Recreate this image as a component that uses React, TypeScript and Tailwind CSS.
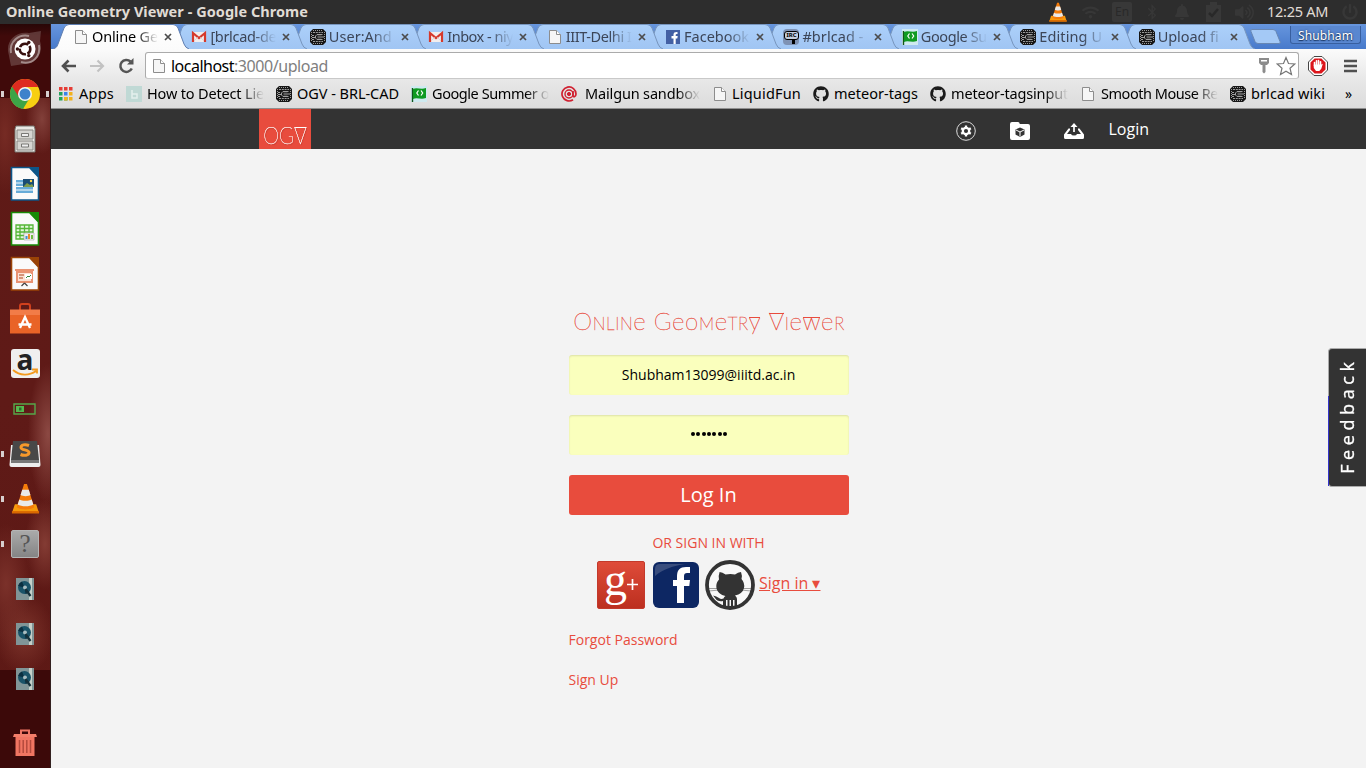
import { useLayoutEffect, useRef, useState, type ReactNode } from 'react';
import { FaGithub, FaBluetoothB, FaBell, FaWifi, FaVolumeUp, FaPowerOff } from 'react-icons/fa';

/* Text whose tracking is adjusted so that the line fills a given width. */
function Fit({ w, children, className = '' }: { w: number; children: string; className?: string }) {
  const ref = useRef<HTMLSpanElement>(null);
  const [ls, setLs] = useState(0);
  useLayoutEffect(() => {
    if (ref.current) {
      const natural = ref.current.getBoundingClientRect().width;
      setLs((w - natural) / children.length);
    }
  }, []);
  return (
    <span ref={ref} className={`inline-block whitespace-pre ${className}`} style={{ letterSpacing: ls }}>
      {children}
    </span>
  );
}

const Chip = () => (
  <svg width="16" height="16" viewBox="0 0 16 16" className="shrink-0">
    <path d="M3 0h10l3 3v10l-3 3H3l-3-3V3z" fill="#161616" />
    <path d="M3 1.500h10M3 14.500h10M1.500 3v10M14.500 3v10" stroke="#9a9a9a" strokeWidth="1" strokeDasharray="1 1" fill="none" />
    <path d="M3 3.500h10M3 12.500h10" stroke="#9a9a9a" strokeWidth="1" strokeDasharray="2 .8" />
    <path d="M12.500 5.500H7L5.500 7v2L7 10.500h5.500M14 8H8.500M2 6.500h2M2 8.500h3M2 10.500h2" fill="none" stroke="#a0a0a0" strokeWidth="1" />
    <path d="M7.500 6.500h4v3h-4z" fill="#5e5e5e" />
  </svg>
);

const Page = () => (
  <svg width="16" height="16" viewBox="0 0 16 16" className="shrink-0">
    <path d="M2.500 1.500h7l4 4v9h-11z" fill="#f6f6f6" stroke="#8d8d8d" />
    <path d="M9.500 1.500v4h4" fill="#fff" stroke="#8d8d8d" />
  </svg>
);

const Gmail = () => (
  <svg width="16" height="16" viewBox="0 0 16 16" className="shrink-0">
    <path d="M1 3h14v10H1z" fill="#f2eded" />
    <path d="M2 13V4L8 9l6-5v9" fill="none" stroke="#d5392c" strokeWidth="2.200" />
    <path d="M3 12l4-4M13 12l-4-4" stroke="#d9cccc" strokeWidth=".7" />
  </svg>
);

const Flag = () => (
  <svg width="16" height="16" viewBox="0 0 16 16" className="shrink-0">
    <path d="M0 0h16v16H0z" fill="#cfeaf0" />
    <path d="M1.500 2v14" stroke="#11551a" strokeWidth="1.400" />
    <path d="M2 3c4-2 8 1 13-1v10c-5 2-9-1-13 1z" fill="#0f9a22" />
    <path d="M7.500 4.500L5.800 7l1.700 2.500M10 4.500L11.700 7 10 9.500" stroke="#fff" strokeWidth="1.200" fill="none" />
  </svg>
);

const Facebook = () => (
  <svg width="16" height="16" viewBox="0 0 16 16" className="shrink-0">
    <path d="M1 1h14v14H1z" fill="#4360a4" />
    <path d="M8.500 15V9.500h-2V7h2V5.500C8.500 3.500 10 2.800 12.500 3v2c-1.500 0-1.800.1-1.800 1v1h2l-.4 2.500h-1.600V15z" fill="#fff" />
  </svg>
);

const Irc = () => (
  <span className="flex h-4 w-4 shrink-0 flex-col items-center rounded-[4px] bg-[#7e92b4] pt-[2px]">
    <span className="flex h-[9px] w-[15px] items-center justify-center rounded-[3px] border border-black bg-[#c4cede] text-[6px] font-bold leading-none text-black">IRC</span>
    <span className="ml-[4px] h-[4px] w-[3px] bg-black" />
  </span>
);

const Mailgun = () => (
  <svg width="16" height="16" viewBox="0 0 16 16" className="shrink-0" fill="none" stroke="#d02030">
    <circle cx="8" cy="8" r="1.600" fill="#d02030" />
    <circle cx="8" cy="8" r="4" strokeWidth="1.400" />
    <path d="M12 5v4.500c0 2 3 1.500 3-1.500a7 7 0 1 0-3 5.700" strokeWidth="1.700" />
  </svg>
);

const Faded = () => (
  <svg width="16" height="16" viewBox="0 0 16 16" className="shrink-0">
    <path d="M0 0h16v16H0z" fill="#c0d9d5" />
    <path d="M6 4v8h5V8H6" fill="none" stroke="#e4efed" strokeWidth="1.500" />
  </svg>
);

const Apps = () => (
  <svg width="14" height="14" viewBox="0 0 14 14" className="shrink-0">
    <path d="M0 0h3.500v3.500H0zM5 0h3.500v3.500H5zM10 0h3.500v3.500H10z" fill="#e53c35" />
    <path d="M0 5h3.500v3.500H0z" fill="#22a25a" /><path d="M5 5h3.500v3.500H5z" fill="#3b82e8" /><path d="M10 5h3.500v3.500H10z" fill="#f3b21b" />
    <path d="M0 10h3.500v3.500H0zM5 10h3.500v3.500H5z" fill="#22a25a" /><path d="M5 10h3.500v3.500H5zM10 10h3.500v3.500H10z" fill="#f3b21b" />
  </svg>
);

const Vlc = ({ size }: { size: number }) => (
  <svg width={size} height={size} viewBox="0 0 32 32" className="shrink-0">
    <path d="M5 22h22l3 9H2z" fill="#f79a0c" />
    <path d="M2 29h28v2.500H2z" fill="#d96800" />
    <path d="M14.500 1h3L25 25c-4 3-14 3-18 0z" fill="#f57c0a" />
    <path d="M12.600 7h6.800l1.700 5.500c-2 1.500-8 1.500-10.200 0zM9.600 17c3 1.800 9.800 1.800 12.800 0l1.700 5.200c-3.500 2.400-12.500 2.400-16.200 0z" fill="#e9e9e9" />
  </svg>
);

type Tab = { icon: ReactNode; text: string; w: number };
const tabs: Tab[] = [
  { icon: <Page />, text: 'Online Ge', w: 66 },
  { icon: <Gmail />, text: '[brlcad-de', w: 66 },
  { icon: <Chip />, text: 'User:And', w: 63 },
  { icon: <Gmail />, text: 'Inbox - niy', w: 66 },
  { icon: <Page />, text: 'IIIT-Delhi I', w: 66 },
  { icon: <Facebook />, text: 'Facebook', w: 65 },
  { icon: <Irc />, text: '#brlcad -', w: 61 },
  { icon: <Flag />, text: 'Google Su', w: 66 },
  { icon: <Chip />, text: 'Editing U', w: 63 },
  { icon: <Chip />, text: 'Upload fi', w: 61 },
];

function TabItem({ tab, index }: { tab: Tab; index: number }) {
  const active = index === 0;
  return (
    <div className="relative -mr-[17.600px] h-[25px] w-[136px] shrink-0" style={{ zIndex: 20 - index }}>
      <svg className="absolute inset-0" width="136" height="25" viewBox="0 0 136 25">
        <defs>
          <linearGradient id={`tab${index}`} x1="0" y1="0" x2="0" y2="1">
            <stop offset="0" stopColor={active ? '#ffffff' : '#acd0fa'} />
            <stop offset="1" stopColor={active ? '#fbfbfb' : '#a0c5f3'} />
          </linearGradient>
        </defs>
        <path
          d="M0 25C3 24 4 23 5 20L11 4Q12.500 .5 16 .5H120Q123.500 .5 125 4L131 20Q132.500 24 136 25"
          fill={`url(#tab${index})`}
          stroke={active ? '#5f7eb0' : '#7795bd'}
          strokeWidth="1"
        />
      </svg>
      <div className="relative flex h-full items-center pl-5">
        {tab.icon}
        <span className={`ml-[3px] flex w-[66px] shrink-0 text-[14.500px] leading-[22px] -mt-px [mask-image:linear-gradient(to_right,#000_66%,transparent)] ${active ? 'text-black' : 'text-[#3c4658]'}`}>
          <Fit w={tab.w}>{tab.text}</Fit>
        </span>
        <svg className="ml-[6px]" width="8" height="8" viewBox="0 0 8 8"><path d="M1 1l6 6M7 1l-6 6" stroke="#4c4c4c" strokeWidth="1.700" /></svg>
      </div>
    </div>
  );
}

type Bookmark = { icon: ReactNode; text: string; w: number; gap?: number; fade?: boolean };
const bookmarks: Bookmark[] = [
  { icon: <Apps />, text: 'Apps', w: 35, gap: 6 },
  { icon: <Faded />, text: 'How to Detect Lie', w: 117, fade: true },
  { icon: <Chip />, text: 'OGV - BRL-CAD', w: 102 },
  { icon: <Flag />, text: 'Google Summer o', w: 117, fade: true },
  { icon: <Mailgun />, text: 'Mailgun sandbox', w: 115, gap: 8, fade: true },
  { icon: <Page />, text: 'LiquidFun', w: 69, gap: 4 },
  { icon: <FaGithub size={16} className="shrink-0 text-[#1b1b1b]" />, text: 'meteor-tags', w: 84 },
  { icon: <FaGithub size={16} className="shrink-0 text-[#1b1b1b]" />, text: 'meteor-tagsinput', w: 117, fade: true },
  { icon: <Page />, text: 'Smooth Mouse Re', w: 117, fade: true },
  { icon: <Chip />, text: 'brlcad wiki', w: 74 },
];

function Doc({ edge, kind }: { edge: string; kind: 'text' | 'sheet' | 'slides' }) {
  return (
    <svg width="30" height="36" viewBox="0 0 30 36">
      <path d="M1.500 1.500h18L28.500 11v23h-27z" fill="#fafafa" stroke={edge} strokeWidth="1.600" />
      <path d="M19 1h10v10z" fill={edge} />
      {kind === 'text' && (
        <g>
          <path d="M6 14h17v2.500H6zM6 17.500h17V20H6zM6 21h17v2.500H6zM6 24.500h17V27H6z" fill="#66abd8" />
          <path d="M13 13h11v8H13z" fill="#194c74" /><path d="M13 21l4-4 3 2 2-1 2 3z" fill="#7c9a4b" /><circle cx="21" cy="15" r="1.200" fill="#ffd447" />
        </g>
      )}
      {kind === 'sheet' && (
        <g>
          <path d="M6 14h17v14H6z" fill="#e5f7df" />
          <path d="M6 14h17v14H6zM6 17.500h17M6 21h17M6 24.500h17M10 14v14M14.500 14v14M19 14v14" stroke="#55b637" fill="none" strokeWidth="1.300" />
          <path d="M14 22h10v7H14z" fill="#eee" stroke="#aaa" strokeWidth=".6" /><path d="M15.500 25h2v3h-2z" fill="#3e91d2" /><path d="M18 23h2v5h-2z" fill="#e98c2b" /><path d="M21 24h2v4h-2z" fill="#71bb43" />
        </g>
      )}
      {kind === 'slides' && (
        <g>
          <path d="M5 13h19v2H5zM6 15h17v12H6z" fill="#e99372" /><path d="M8 17h13v8H8z" fill="#fbe2d6" />
          <path d="M9 19h5M9 22h4" stroke="#c8795a" strokeWidth="1.500" /><path d="M15 18h7v5h-7z" fill="#fff" /><path d="M16 22l2-2 1 1 2-2" stroke="#35863d" fill="none" />
          <path d="M14.500 27l-3 3M14.500 27l3 3" stroke="#444" strokeWidth="1.200" />
        </g>
      )}
    </svg>
  );
}

const Disk = () => (
  <svg width="20" height="24" viewBox="0 0 20 24">
    <path d="M1 1h18v22H1z" fill="#809597" /><path d="M14 1h3v22h-3z" fill="#c5cfc8" />
    <circle cx="9.500" cy="10.500" r="6.500" fill="#1a5368" /><path d="M9.500 10.500L3 9a6.500 6.500 0 0 1 4-4.500zM9.500 10.500l5 4.500a6.500 6.500 0 0 1-4 2z" fill="#0b3041" />
    <circle cx="10" cy="10.500" r="2" fill="#a9bcc0" /><path d="M10.500 12l5 7" stroke="#15303a" strokeWidth="2.200" />
  </svg>
);

const launcher: { icon: ReactNode; left?: boolean; right?: boolean }[] = [
  {
    icon: (
      <svg width="36" height="36" viewBox="0 0 36 36">
        <path d="M1 20C0 8 10 0 22 2l12-2-1 10c4 12-4 24-16 23L4 35z" fill="#a08d8a" opacity=".35" />
        <path d="M4 22C2 10 12 3 22 5M32 14c2 12-7 20-18 17" stroke="#dbd0ce" fill="none" opacity=".55" strokeWidth="2" />
        <circle cx="18" cy="18" r="10.500" fill="#fff" />
        <circle cx="18" cy="18" r="5.300" fill="none" stroke="#37100f" strokeWidth="2.600" strokeDasharray="9.600 1.500" strokeDashoffset="4" />
        <circle cx="10.400" cy="18" r="1.700" fill="#37100f" /><circle cx="21.800" cy="11.400" r="1.700" fill="#37100f" /><circle cx="21.800" cy="24.600" r="1.700" fill="#37100f" />
      </svg>
    ),
  },
  {
    left: true, right: true,
    icon: (
      <svg width="30" height="30" viewBox="0 0 30 30">
        <circle cx="15" cy="15" r="15" fill="#f8cf12" />
        <path d="M15 15L2 7.500A15 15 0 0 0 13 29.900l7-11.400z" fill="#3da447" />
        <path d="M2 7.500A15 15 0 0 1 28.200 8H15l-6 10z" fill="#de2b20" />
        <circle cx="15" cy="15" r="7" fill="#f4f4f4" /><circle cx="15" cy="15" r="5.500" fill="#3e82cb" />
      </svg>
    ),
  },
  {
    icon: (
      <svg width="22" height="28" viewBox="0 0 22 28">
        <path d="M2 1h18l1 3v23H1V4z" fill="#e9e8e4" stroke="#777671" />
        <path d="M3 5h16v9H3zM3 16h16v9H3z" fill="#d6d5d1" stroke="#898883" />
        <path d="M7.500 8.500h7v3h-7zM7.500 19h7v3h-7z" fill="#eee" stroke="#6e6e6a" strokeWidth=".9" />
      </svg>
    ),
  },
  { icon: <Doc edge="#0c5689" kind="text" /> },
  { icon: <Doc edge="#188a06" kind="sheet" /> },
  { icon: <Doc edge="#9a4306" kind="slides" /> },
  {
    icon: (
      <svg width="30" height="32" viewBox="0 0 30 32">
        <path d="M10 7V3q0-2 2-2h6q2 0 2 2v4" fill="none" stroke="#d0401d" strokeWidth="2" />
        <path d="M0 7h30v23.500H0z" fill="#e96327" /><path d="M0 6.500h30V12H0z" fill="#f27c48" />
        <path d="M10 25l5-11 5 11M8.500 21.500h13" fill="none" stroke="#fff" strokeWidth="2.300" />
      </svg>
    ),
  },
  {
    icon: (
      <span className="relative flex h-[29px] w-[29px] justify-center rounded-[3px] bg-[#efefef] font-['Open_Sans',sans-serif] text-[28px] font-bold leading-[20px] text-[#222]">
        a
        <svg className="absolute bottom-0 left-0" width="29" height="12" viewBox="0 0 29 12"><path d="M2 4c7 6 16 6 23 1M21 3.500h5v4" fill="none" stroke="#f39a1f" strokeWidth="1.800" /></svg>
      </span>
    ),
  },
  {
    icon: (
      <svg width="24" height="12" viewBox="0 0 24 12"><path d="M1 1h21v10H1z" fill="none" stroke="#56a84a" strokeWidth="1.400" /><path d="M3 3h8v6H3z" fill="#55b94e" /><path d="M6 4.500h2.500v3H6z" fill="#2c6b2b" /></svg>
    ),
  },
  {
    left: true,
    icon: (
      <svg width="32" height="28" viewBox="0 0 32 28">
        <path d="M2 5h28l1.500 20q0 2-2 2h-27q-2 0-2-2z" fill="#ededed" /><path d="M4 1h24l2 19v3H2v-3z" fill="#484848" /><path d="M2 20h28v3H2z" fill="#777" />
        <path d="M20 5.500c-4-1.500-8-.8-8 2 0 3 8 1.800 8 5 0 3-5 3.500-8.500 2" fill="none" stroke="#f6992b" strokeWidth="3" />
      </svg>
    ),
  },
  { left: true, icon: <Vlc size={31} /> },
  {
    left: true,
    icon: <span className="flex h-[28px] w-[28px] items-center justify-center rounded-[2px] border border-[#b5b5b5] bg-gradient-to-b from-[#aaa] to-[#858585] font-['Liberation_Serif',serif] text-[25px] leading-none text-[#555]">?</span>,
  },
  { icon: <Disk /> },
  { icon: <Disk /> },
  { icon: <Disk /> },
];

function Launcher() {
  return (
    <aside className="flex w-[51px] shrink-0 flex-col border-r border-[#32201f] bg-[#400a0a] bg-[linear-gradient(#280707,#400a0a_12px,#400a0a_74px,transparent_74px,transparent_646px,#3c0909_646px),radial-gradient(ellipse_16px_35px_at_42px_95px,#82403a,transparent),radial-gradient(ellipse_18px_60px_at_5px_110px,#762b24,transparent),radial-gradient(ellipse_20px_70px_at_48px_410px,#8c4943,transparent),radial-gradient(ellipse_25px_60px_at_6px_560px,#7b312a,transparent),radial-gradient(ellipse_20px_45px_at_45px_520px,#843c34,transparent),radial-gradient(ellipse_30px_40px_at_24px_610px,#7d342b,transparent),linear-gradient(#5e1a16,#5f1a17_50%,#5d1915)] pt-[2px]">
      {launcher.map((item, i) => (
        <div key={i} className="flex h-[45px] w-[50px] shrink-0 items-center justify-between px-px">
          <span className={`h-[6px] w-[3px] ${item.left ? 'bg-[#d7cfce]' : ''}`} />
          {item.icon}
          <span className={`h-[6px] w-[3px] ${item.right ? 'bg-[#d7cfce]' : ''}`} />
        </div>
      ))}
      <div className="mt-auto flex justify-center pb-[11px]">
        <svg width="24" height="28" viewBox="0 0 24 28">
          <path d="M8 5V1.500h8V5" stroke="#ee7664" strokeWidth="2" fill="none" /><path d="M1 5h22l1 3H0z" fill="#f37e6a" /><path d="M2.500 8h19v19h-19z" fill="#f17562" />
          <path d="M6.500 11v13M10.200 11v13M13.800 11v13M17.500 11v13" stroke="#b44a3d" strokeWidth="1.500" />
        </svg>
      </div>
    </aside>
  );
}

function SystemBar() {
  return (
    <header className="flex h-6 shrink-0 items-center bg-[#2d2d2d] px-[6px] text-[#e0dcd5]">
      <Fit w={302} className="text-[14.500px] font-bold">Online Geometry Viewer - Google Chrome</Fit>
      <div className="ml-auto flex items-center text-[#373737]">
        <Vlc size={20} />
        <FaWifi size={17} className="ml-[14px]" />
        <span className="ml-[13px] flex h-[20px] w-[20px] items-center justify-center rounded-[2px] bg-[#383838] text-[12px] text-[#292929]">En</span>
        <FaBluetoothB size={16} className="ml-[12px]" />
        <FaBell size={16} className="ml-[14px]" />
        <svg className="ml-[15px]" width="17" height="20" viewBox="0 0 17 20"><path d="M1 3h4V0h7v3h4v17H1z" fill="#383838" /><path d="M4 11l3 3 6-7" stroke="#292929" strokeWidth="2.500" fill="none" /></svg>
        <FaVolumeUp size={19} className="ml-[13px]" />
        <Fit w={61} className="ml-[13px] text-[14.500px] text-[#e0dcd5]">12:25 AM</Fit>
        <FaPowerOff size={16} className="ml-[14px] mr-[2px]" />
      </div>
    </header>
  );
}

function Browser() {
  return (
    <>
      <div className="relative flex h-[25px] shrink-0 items-stretch bg-gradient-to-b from-[#6796de] to-[#487acb] pl-[2px]">
        {tabs.map((tab, i) => <TabItem key={i} tab={tab} index={i} />)}
        <svg className="ml-[12px] mt-[5px] shrink-0" width="32" height="16" viewBox="0 0 32 16"><path d="M3 .5h21q2 0 3 2l4 10q1 2-1 2H9q-2 0-3-2L2 2.500Q1 .5 3 .5z" fill="#a4c9f6" stroke="#6787b4" /></svg>
        <div className="ml-auto mr-[5px] mt-[2px] flex h-[18px] w-[71px] shrink-0 items-center justify-center self-start rounded-b-[3px] border border-t-0 border-[#385f9f] bg-[#5987d0] pt-[2px] text-[12px] leading-[14px] text-white [text-shadow:0_0_2px_#17335f,0_1px_1px_#17335f]">
          <Fit w={55}>Shubham</Fit>
        </div>
      </div>
      <div className="flex h-[32px] shrink-0 items-center bg-gradient-to-b from-[#fbfbfb] to-[#e7e7e7] pl-[9px]">
        <svg width="58" height="18" viewBox="0 0 58 18" fill="none" className="shrink-0">
          <path d="M16 10H3M8.500 4.500L3 10l5.500 5.500" stroke="#505050" strokeWidth="2.600" />
          <path d="M30 10h13M37.500 4.500L43 10l-5.500 5.500" stroke="#c2c2c2" strokeWidth="2.200" />
        </svg>
        <svg className="shrink-0" width="17" height="17" viewBox="0 0 17 17"><path d="M13.800 11.500A6 6 0 1 1 12.500 4.500" stroke="#555" strokeWidth="2.500" fill="none" /><path d="M15.500 1v6.500H9z" fill="#555" /></svg>
        <div className="ml-[10px] mt-px flex h-[27px] w-[1154px] shrink-0 items-center rounded-[3px] border border-[#ababab] border-b-[#c9c9c9] bg-white pl-[5px] pr-[2px] text-[16px] text-black">
          <Page />
          <span className="ml-[4px] flex leading-[22px]"><Fit w={63}>localhost</Fit><Fit w={94} className="text-[#808080]">:3000/upload</Fit></span>
          <svg className="ml-auto" width="12" height="17" viewBox="0 0 12 17"><path d="M1 1h10v5L9 8H7.500v7L6 16.500 4.500 15V8H3L1 6z" fill="#8b8b8b" /><path d="M3 3h6v1.500H3z" fill="#fff" /></svg>
          <svg className="ml-[6px]" width="20" height="20" viewBox="0 0 20 20"><path d="M10 1.500l2.500 6 6.300.5-4.800 4.200 1.500 6.300L10 15.200l-5.500 3.300L6 12.200 1.200 8l6.300-.5z" fill="#fff" stroke="#777" strokeWidth="1.200" /></svg>
        </div>
        <svg className="ml-[9px] mt-px" width="20" height="20" viewBox="0 0 20 20">
          <path d="M6 .5h8L19.500 6v8L14 19.500H6L.5 14V6z" fill="#fff" stroke="#444" /><path d="M6.600 2.500h6.800l4.100 4.100v6.800l-4.100 4.100H6.600l-4.100-4.100V6.600z" fill="#dc151b" />
          <path d="M6.500 10V6.500M8.500 9V4.800M10.500 9V4.500M12.500 10V5.800" stroke="#fff" strokeWidth="1.600" strokeLinecap="round" /><path d="M5.800 8.500h7.500l1.500-.8-1.500 5-2 2.300H8l-2.200-3z" fill="#fff" />
        </svg>
        <svg className="ml-[16px] mt-[2px]" width="13" height="14" viewBox="0 0 13 14"><path d="M0 2h13M0 7h13M0 12h13" stroke="#505050" strokeWidth="2.700" /></svg>
      </div>
      <div className="flex h-[28px] shrink-0 items-center border-b border-[#909090] bg-gradient-to-b from-[#e7e7e7] to-[#dcdcdc] pb-[2px] pl-[8px] text-[14.500px] text-black">
        {bookmarks.map((b) => (
          <div key={b.text} className="mr-[12px] flex shrink-0 items-center" style={{ gap: b.gap ?? 5 }}>
            {b.icon}
            <span className={`-mt-px flex leading-[22px] ${b.fade ? '[mask-image:linear-gradient(to_right,#000_80%,transparent)]' : ''}`}>
              <Fit w={b.w}>{b.text}</Fit>
            </span>
          </div>
        ))}
        <span className="ml-[8px] text-[14px] leading-none">»</span>
      </div>
    </>
  );
}

/* A letter closed by a bar along its top. */
const Barred = ({ children, bar }: { children: string; bar: string }) => (
  <span className="relative inline-block">{children}<span className={`absolute h-px bg-current ${bar}`} /></span>
);

function SiteNav() {
  return (
    <nav className="flex h-10 shrink-0 bg-[#333] pl-[208px] text-white">
      <div className="flex h-10 w-[52px] items-end justify-center bg-[#e84c3d] pb-px font-['Lato','Inter',sans-serif] text-[24px] font-thin leading-[26px] [text-shadow:1px_1px_1px_#8d2a20] [-webkit-text-stroke:0.25px_#fff]">
        <span className="flex scale-x-[.84]"><span>OG</span><Barred bar="inset-x-[1px] top-[5px]">V</Barred></span>
      </div>
      <div className="ml-[645px] flex items-center pt-[4px]">
        <svg width="20" height="20" viewBox="0 0 20 20">
          <circle cx="10" cy="10" r="9.300" fill="none" stroke="#ddd" />
          <circle cx="10" cy="10" r="3.200" fill="none" stroke="#fff" strokeWidth="2.300" />
          <path d="M10 4.500v2M10 13.500v2M5.200 7.200l1.700 1M13.100 11.800l1.700 1M5.200 12.800l1.700-1M13.100 8.200l1.700-1" stroke="#fff" strokeWidth="2.300" />
        </svg>
        <svg className="ml-[34px]" width="20" height="18" viewBox="0 0 20 18">
          <path d="M0 2q0-2 2-2h6q1.500 0 1.800 2H18q2 0 2 2v12q0 2-2 2H2q-2 0-2-2z" fill="#fff" />
          <path d="M10 5.500l4.500 2v5L10 15l-4.500-2.500v-5z" fill="#333" /><path d="M6 8l4 2 4-2M10 10v4.500" stroke="#fff" fill="none" />
        </svg>
        <svg className="ml-[34px]" width="20" height="16" viewBox="0 0 20 16">
          <path d="M4.500 5.500H6V7L3 11h4q.5 1.500 3 1.500t3-1.500h4l-3-4V5.500h1.500l4.500 6v3q0 1.500-1.500 1.500h-17Q0 16 0 14.500v-3z" fill="#fff" />
          <path d="M10 9V3" stroke="#fff" strokeWidth="1.700" /><path d="M6.500 4L10 0l3.500 4z" fill="#fff" />
        </svg>
      </div>
      <span className="ml-[24.500px] mt-[8px] font-['Open_Sans',sans-serif] text-[16px] leading-6">Login</span>
    </nav>
  );
}

function LoginForm() {
  return (
    <form className="ml-[518px] flex w-[280px] flex-col pt-[156px] font-['Open_Sans',sans-serif] text-[14px] text-[#e84c3d]">
      <h1 className="flex h-[32px] justify-center whitespace-pre font-['Lato','Inter',sans-serif] text-[24px] font-thin leading-[32px] tracking-[.65px] [-webkit-text-stroke:0.35px_#e84c3d]">
        <span>
          O<span className="[font-variant:small-caps]">nlin</span>e Geo<span className="[font-variant:small-caps]">m</span>e<span className="[font-variant:small-caps]">tr</span><Barred bar="left-0 right-[1px] top-[12px]">y</Barred> <Barred bar="left-0 right-[1px] top-[8px]">V</Barred><span className="[font-variant:small-caps]">i</span>e<Barred bar="left-0 right-[1px] top-[12px]">w</Barred>e<span className="[font-variant:small-caps]">r</span>
        </span>
      </h1>
      <div className="mt-[18px] flex h-10 items-center justify-center rounded-[3px] bg-[#faffbd] pb-[2px] pr-px text-black shadow-[inset_0_1px_2px_rgba(0,0,0,0.12)]">Shubham13099@iiitd.ac.in</div>
      <div className="mt-5 flex h-10 items-center justify-center gap-[1.300px] rounded-[3px] bg-[#faffbd] pb-[2px] shadow-[inset_0_1px_2px_rgba(0,0,0,0.12)]">
        {Array.from({ length: 7 }, (_, i) => <span key={i} className="h-[4px] w-[4px] rounded-full bg-black" />)}
      </div>
      <button type="button" className="mt-5 h-10 rounded-[3px] bg-[#e84c3d] pr-px text-[20px] leading-10 text-white">Log In</button>
      <span className="mt-[18px] h-5 pr-px text-center leading-5">OR SIGN IN WITH</span>
      <div className="mt-[7px] flex h-[50px] items-center pl-[28px]">
        <span className="relative flex h-12 w-12 justify-center rounded-[2px] border border-[#c3392b] bg-gradient-to-b from-[#df4b39] to-[#bc2f1f]">
          <span className="absolute left-[6px] top-[-6px] font-['Liberation_Serif',serif] text-[46px] leading-[48px] text-white">g</span>
          <svg className="absolute right-[6px] top-[17px]" width="11" height="11" viewBox="0 0 11 11"><path d="M5.500 0v11M0 5.500h11" stroke="#fff" strokeWidth="1.700" /></svg>
        </span>
        <svg className="ml-[8px]" width="46" height="46" viewBox="0 0 46 46">
          <rect width="46" height="46" rx="6" fill="#0d2763" /><path d="M2 14V7q0-5 5-5h25C20 4 10 7 2 14z" fill="#56688f" opacity=".6" />
          <path d="M24 41V24h-4v-6h4v-4c0-6 3-9 9-9h4v6h-3c-2 0-3 1-3 3v4h6l-.7 6H31v17z" fill="#fff" />
        </svg>
        <svg className="ml-[6px]" width="50" height="50" viewBox="0 0 50 50">
          <circle cx="25" cy="25" r="23" fill="#f8f8f8" />
          <path d="M4 28.500h9M4 31l10-1M37 28.500h9M36 30l10 1" stroke="#888" fill="none" strokeWidth=".8" />
          <path d="M14.500 12q3 0 6 2.500 5-1 9.500 0 3-2.500 6-2.500 1.500 4 .5 7 3.500 4 2.500 9-1.500 6-9 7.500 2 1.500 2 3.500v8h-2.500v-7h-1.500v8h-2v-8h-1.500v8h-2v-8H21v7h-3v-6q-5.500 1-8-3l-2-2.500q3.500.5 6 2.500 2 1.500 4.500.500.5-2 2-2.500-7.500-1.500-9-7.500-1-5 2.500-9-1-3 .5-7z" fill="#333" />
          <circle cx="25" cy="25" r="23" fill="none" stroke="#333" strokeWidth="3.800" />
        </svg>
        <span className="ml-[4px] mt-[-4px] whitespace-nowrap text-[16px] leading-6 underline">Sign in ▾</span>
      </div>
      <span className="-ml-[.5px] mt-[20px] h-5 leading-5">Forgot Password</span>
      <span className="-ml-[.5px] mt-5 h-5 leading-5">Sign Up</span>
    </form>
  );
}

export default function App() {
  return (
    <div className="flex h-[768px] w-[1366px] flex-col overflow-hidden bg-[#f3f3f3] font-['Noto_Sans','Open_Sans',sans-serif]">
      <SystemBar />
      <div className="flex min-h-0 flex-1">
        <Launcher />
        <div className="flex min-w-0 flex-1 flex-col">
          <Browser />
          <SiteNav />
          <main className="relative flex-1 bg-[#f3f3f3]">
            <LoginForm />
            <div className="absolute right-0 top-[199px] flex h-[139px] w-[38px] items-center justify-center rounded-l-[4px] border border-r-0 border-[#aaa] bg-[#333] pr-[2px]">
              <span className="absolute -left-px bottom-0 h-[90px] w-px bg-[#3434cc]" />
              <span className="rotate-180 font-['Open_Sans',sans-serif] text-[18px] leading-6 text-white [writing-mode:vertical-rl] [-webkit-text-stroke:0.3px_#fff]"><span className="tracking-[4.600px]">Feedbac</span>k</span>
            </div>
          </main>
        </div>
      </div>
    </div>
  );
}
